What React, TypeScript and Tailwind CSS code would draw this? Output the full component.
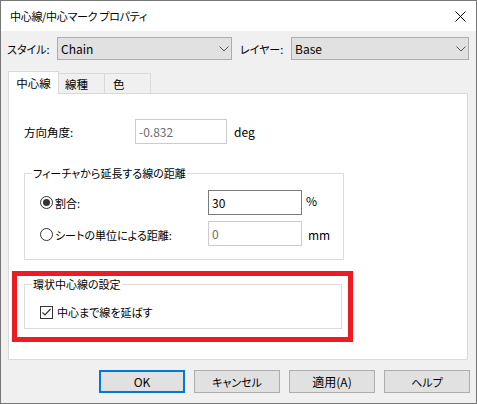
import React from "react";

function Combo({ className, text }: { className: string; text: string }) {
  return (
    <div
      className={`${className} h-[23px] bg-[#e1e1e1] border border-[#adadad] flex items-center justify-between pl-[3px] pr-[2px] text-[12px]`}
    >
      <span>{text}</span>
      <svg width="10" height="6" viewBox="0 0 10 6">
        <polyline points="0.5,0.5 5,5 9.5,0.5" fill="none" stroke="#555" strokeWidth="1" />
      </svg>
    </div>
  );
}

function Radio({ checked }: { checked?: boolean }) {
  return (
    <span className="w-[13px] h-[13px] rounded-full border border-[#333] bg-white flex items-center justify-center shrink-0">
      {checked && <span className="w-[7px] h-[7px] rounded-full bg-[#333]" />}
    </span>
  );
}

function Checkbox() {
  return (
    <span className="w-[13px] h-[13px] border border-[#333] bg-white flex items-center justify-center shrink-0">
      <svg width="11" height="11" viewBox="0 0 11 11">
        <polyline points="1.5,5.5 4,8 9.5,2" fill="none" stroke="#333" strokeWidth="1.2" />
      </svg>
    </span>
  );
}

function Btn({ children, primary }: { children: React.ReactNode; primary?: boolean }) {
  return (
    <div
      className={`w-[86px] h-[23px] bg-[#e1e1e1] flex items-center justify-center ${
        primary ? "border-2 border-[#0078d7]" : "border border-[#adadad]"
      }`}
    >
      {children}
    </div>
  );
}

export default function App() {
  return (
    <div className="w-[477px] h-[404px] border border-[#777777] flex flex-col bg-[#f0f0f0] text-[11px] text-black font-['Noto_Sans_CJK_JP',sans-serif] [font-feature-settings:'palt'] overflow-hidden leading-[16px]">
      <div className="h-[30px] shrink-0 bg-white flex items-center justify-between pl-[9px] pr-[10px]">
        <span className="text-[11px] tracking-[-0.3px]">中心線/中心マーク プロパティ</span>
        <svg width="11" height="11" viewBox="0 0 11 11">
          <path d="M0.5 0.5 L10.5 10.5 M10.5 0.5 L0.5 10.5" stroke="#000" strokeWidth="1" />
        </svg>
      </div>

      <div className="flex-1 flex flex-col pt-[6px]">
        <div className="flex items-center h-[23px] pl-[6px]">
          <span className="w-[50px]">スタイル:</span>
          <Combo className="w-[175px]" text="Chain" />
          <span className="w-[51px] ml-[8px]">レイヤー:</span>
          <Combo className="w-[178px]" text="Base" />
        </div>

        <div className="mt-[11px] px-[7px] flex flex-col">
          <div className="flex items-end h-[22px]">
            <div className="w-[51px] h-[23px] -mb-px relative z-10 bg-white border-l border-t border-r border-[#d9d9d9] flex items-center justify-center text-[11.5px]">
              中心線
            </div>
            <div className="w-[46px] h-[20px] border-t border-r border-[#d9d9d9] flex items-center pl-[6px] text-[11.5px]">
              線種
            </div>
            <div className="w-[46px] h-[20px] border-t border-r border-[#d9d9d9] flex items-center pl-[8px] text-[11.5px]">
              色
            </div>
          </div>

          <div className="w-[460px] h-[267px] border border-[#d9d9d9] bg-white relative flex flex-col">
            <div className="mt-[25px] flex items-center h-[25px] pl-[15px]">
              <span className="w-[111px] text-[11.5px]">方向角度:</span>
              <div className="w-[92px] h-[25px] border border-[#cccccc] flex items-center pl-[3px] text-[#6d6d6d] text-[12px]">
                -0.832
              </div>
              <span className="ml-[7px] text-[12px]">deg</span>
            </div>

            <div className="mt-[29px] ml-[15px] w-[320px] h-[87px] border border-[#dcdcdc] relative pt-[16px]">
              <span className="absolute left-[7px] -top-[9px] bg-white px-[1px]">
                フィーチャから延長する線の距離
              </span>
              <div className="flex items-center h-[25px] pl-[15px]">
                <div className="w-[168px] flex items-center">
                  <Radio checked />
                  <span className="ml-[2px]">割合:</span>
                </div>
                <div className="w-[94px] h-[25px] border border-[#7a7a7a] flex items-center pl-[3px] text-[12px]">30</div>
                <span className="ml-[4px] -mt-[3px] text-[12px]">%</span>
              </div>
              <div className="mt-[7px] flex items-center h-[25px] pl-[15px]">
                <div className="w-[168px] flex items-center">
                  <Radio />
                  <span className="ml-[2px]">シートの単位による距離:</span>
                </div>
                <div className="w-[94px] h-[25px] border border-[#cccccc] flex items-center pl-[3px] text-[#6d6d6d] -mt-[2px] text-[12px]">
                  0
                </div>
                <span className="ml-[6px] text-[12px]">mm</span>
              </div>
            </div>

            <div className="mt-[24px] ml-[15px] w-[318px] h-[45px] border border-[#dcdcdc] relative pt-[19px]">
              <span className="absolute left-[7px] -top-[9px] bg-white px-[1px]">環状中心線の設定</span>
              <div className="flex items-center h-[16px] pl-[15px]">
                <Checkbox />
                <span className="ml-[4px]">中心まで線を延ばす</span>
              </div>
            </div>

            <div className="absolute left-[3px] top-[177px] w-[341px] h-[71px] border-[5px] border-[#ed1c24] pointer-events-none" />
          </div>
        </div>

        <div className="mt-[10px] flex justify-end gap-[9px] pr-[6px]">
          <Btn primary>
            <span className="text-[12px]">OK</span>
          </Btn>
          <Btn>キャンセル</Btn>
          <Btn>
            <span className="text-[12px]">適用(A)</span>
          </Btn>
          <Btn>ヘルプ</Btn>
        </div>
      </div>
    </div>
  );
}
